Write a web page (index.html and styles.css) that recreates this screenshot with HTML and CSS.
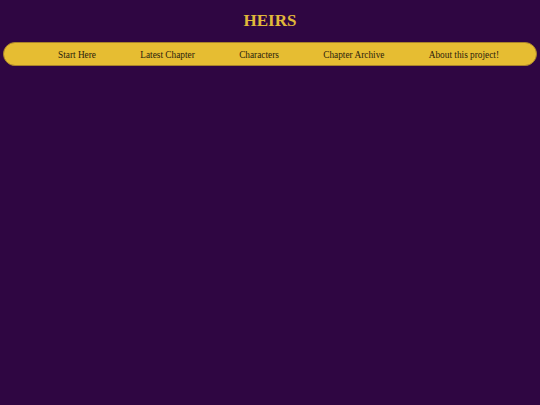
FILE: index.html
```html
<!DOCTYPE html>
<html lang="en">
<head>
<meta charset="utf-8">
<title>HEIRS</title>
<link rel="stylesheet" href="styles.css">
</head>
<body>
<header class="site-header">
  <h1 class="site-title">HEIRS</h1>
  <nav class="main-nav">
    <ul class="nav-list">
      <li class="nav-item"><a href="#">Start Here</a></li>
      <li class="nav-item"><a href="#">Latest Chapter</a></li>
      <li class="nav-item"><a href="#">Characters</a></li>
      <li class="nav-item"><a href="#">Chapter Archive</a></li>
      <li class="nav-item"><a href="#">About this project!</a></li>
    </ul>
  </nav>
</header>
</body>
</html>
```

FILE: styles.css
```css
html, body {
  margin: 0;
  padding: 0;
  background: #2f0642;
  height: 100%;
}
body {
  font-family: "Liberation Serif", "Times New Roman", serif;
}
.site-header {
  padding: 0 3px;
}
.site-title {
  margin: 12px 0 0;
  font-size: 17px;
  line-height: 17px;
  font-weight: bold;
  color: #e0b83a;
  text-align: center;
}
.main-nav {
  margin-top: 13px;
  height: 22px;
  background: #e6bd32;
  border: 1px solid #a8822a;
  border-radius: 12px;
}
.nav-list {
  box-sizing: border-box;
  list-style: none;
  margin: 0;
  padding: 0 37px 2px 54px;
  height: 100%;
  display: flex;
  align-items: center;
  justify-content: space-between;
}
.nav-item a {
  font-size: 9.3px;
  color: #2a1c0c;
  text-decoration: none;
}
```
